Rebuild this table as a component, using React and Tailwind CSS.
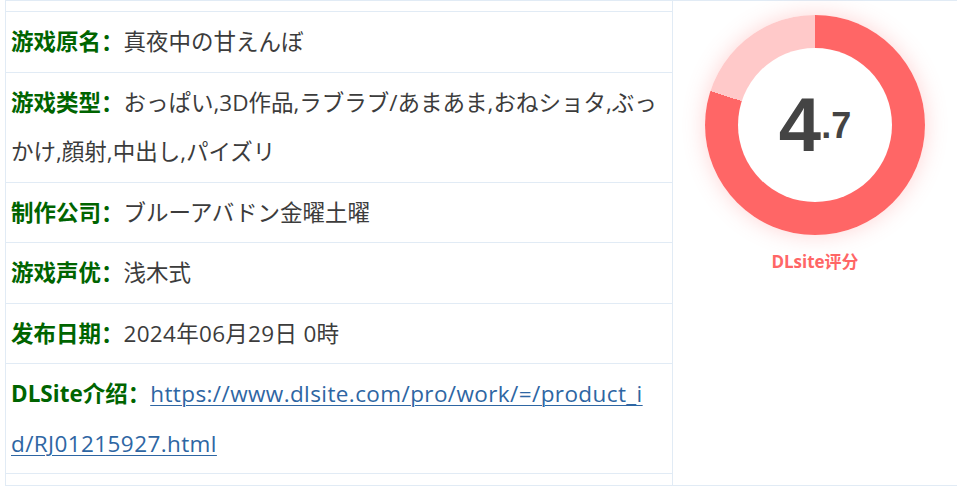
import React from "react";

const rows = [
  { label: "游戏原名：", value: <span>真夜中の甘えんぼ</span> },
  {
    label: "游戏类型：",
    value: (
      <span>
        おっぱい,3D作品,ラブラブ/あまあま,おねショタ,ぶっ
        <br />
        かけ,顔射,中出し,パイズリ
      </span>
    ),
  },
  { label: "制作公司：", value: <span>ブルーアバドン金曜土曜</span> },
  { label: "游戏声优：", value: <span>浅木式</span> },
  { label: "发布日期：", value: <span className="tracking-[0.3px]">2024年06月29日 0時</span> },
  {
    label: "DLSite介绍：",
    value: (
      <a href="#" className="text-[#2e66a3] underline underline-offset-[3px] decoration-1 tracking-[0.4px]">
        https://www.dlsite.com/pro/work/=/product_i
        <br />
        d/RJ01215927.html
      </a>
    ),
  },
];

export default function App() {
  return (
    <div
      className="bg-white w-[957px] h-[487px] overflow-hidden"
      style={{ fontFamily: '"Open Sans","Noto Sans CJK SC",sans-serif' }}
    >
      <div className="ml-[5px] w-[952px] flex border-l border-t border-b border-[#e1ebf5]">
        <div className="w-[667px] shrink-0 border-r border-[#e1ebf5] pt-[10px] pb-[11px]">
          <div className="border-b border-[#e1ebf5]">
            {rows.map((r, i) => (
              <div
                key={i}
                className="border-t border-[#e1ebf5] pl-[5px] py-[5px] text-[22.5px] leading-[49.5px] text-[#3c3c3c] whitespace-nowrap"
              >
                <span className="font-bold text-[#006400]">{r.label}</span>
                {r.value}
              </div>
            ))}
          </div>
        </div>
        <div className="flex-1 flex flex-col items-center pt-[14px]">
          <div className="w-[220px] h-[220px] rounded-full bg-[conic-gradient(#ff6666_0deg_288deg,#ffc9c9_288deg_360deg)] shadow-[0_0_22px_rgba(255,102,102,0.28)] flex items-center justify-center">
            <div className="w-[154px] h-[154px] rounded-full bg-white flex items-center justify-center">
              <div
                className="flex items-baseline text-[#444] font-bold"
                style={{ fontFamily: '"Liberation Sans",Arial,sans-serif' }}
              >
                <span className="text-[76px] leading-none">4</span>
                <span className="text-[36px] leading-none relative -top-[13px]">.7</span>
              </div>
            </div>
          </div>
          <div
            className="mt-[15px] text-[17px] leading-[24px] font-bold text-[#ff6666]"
            style={{ fontFamily: '"Open Sans","Noto Sans CJK SC",sans-serif' }}
          >
            DLsite评分
          </div>
        </div>
      </div>
    </div>
  );
}
